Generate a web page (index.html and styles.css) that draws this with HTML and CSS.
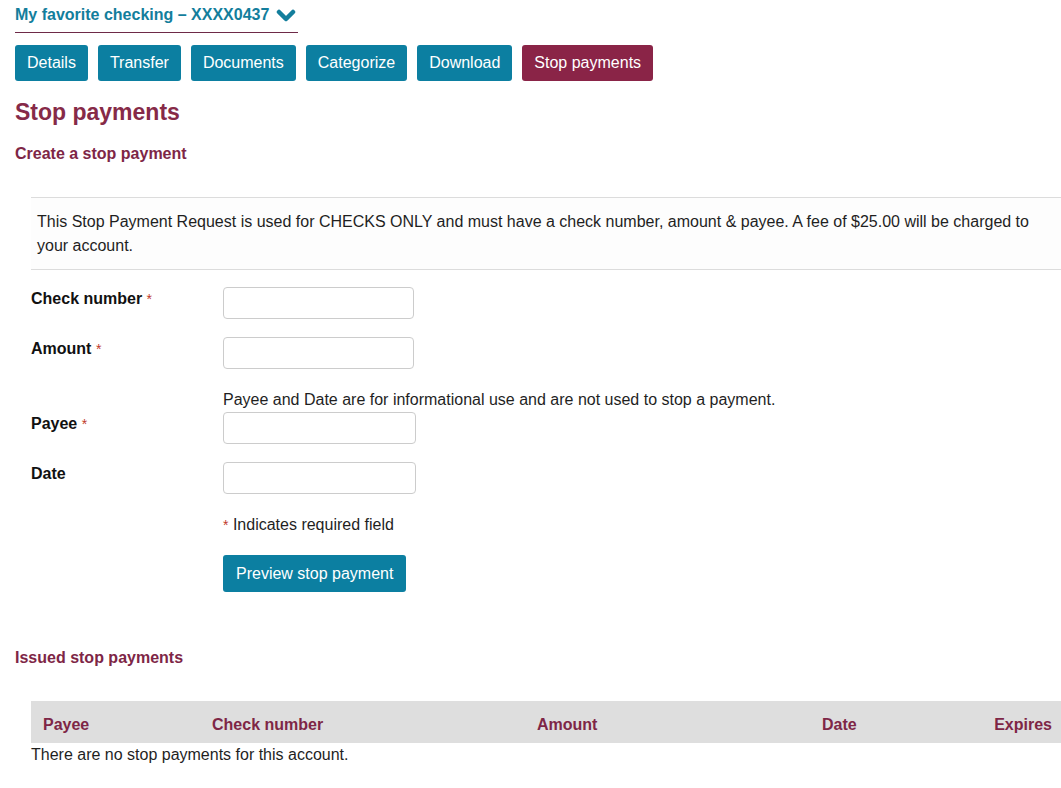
FILE: index.html
```html
<!DOCTYPE html>
<html>
<head>
<meta charset="utf-8">
<link rel="stylesheet" href="styles.css">
</head>
<body>
<div class="page">
  <div class="account">
    <span class="account-name">My favorite checking – XXXX0437</span>
    <svg class="chev" width="20" height="14" viewBox="0 0 20 14"><polyline points="3,3 10,10 17,3" fill="none" stroke="#137e9c" stroke-width="4.5" stroke-linecap="round" stroke-linejoin="round"/></svg>
  </div>
  <nav class="tabs">
    <a class="tab">Details</a>
    <a class="tab">Transfer</a>
    <a class="tab">Documents</a>
    <a class="tab">Categorize</a>
    <a class="tab">Download</a>
    <a class="tab active">Stop payments</a>
  </nav>
  <h1 class="title">Stop payments</h1>
  <h2 class="subtitle">Create a stop payment</h2>
  <div class="section">
    <p class="info">This Stop Payment Request is used for CHECKS ONLY and must have a check number, amount &amp; payee. A fee of $25.00 will be charged to your account.</p>
    <form class="form">
      <div class="row">
        <label class="label">Check number <span class="req">*</span></label>
        <input class="field" type="text">
      </div>
      <div class="row">
        <label class="label">Amount <span class="req">*</span></label>
        <input class="field" type="text">
      </div>
      <div class="note">Payee and Date are for informational use and are not used to stop a payment.</div>
      <div class="row">
        <label class="label">Payee <span class="req">*</span></label>
        <input class="field wide" type="text">
      </div>
      <div class="row">
        <label class="label">Date</label>
        <input class="field wide" type="text">
      </div>
      <div class="required"><span class="req">*</span> Indicates required field</div>
      <div class="actions"><button type="button" class="primary">Preview stop payment</button></div>
    </form>
  </div>
  <h2 class="subtitle issued">Issued stop payments</h2>
  <div class="table">
    <div class="thead">
      <div class="th">Payee</div>
      <div class="th">Check number</div>
      <div class="th">Amount</div>
      <div class="th">Date</div>
      <div class="th last">Expires</div>
    </div>
    <div class="empty">There are no stop payments for this account.</div>
  </div>
</div>
</body>
</html>
```

FILE: styles.css
```css
html, body {
  margin: 0;
  padding: 0;
  background: #fff;
}
body {
  font-family: "Liberation Sans", Arial, sans-serif;
  font-size: 16px;
  color: #1f1f1f;
}
.page {
  padding-left: 15px;
  padding-top: 5px;
}
.account {
  display: inline-flex;
  align-items: center;
  gap: 7px;
  width: 283px;
  line-height: 20px;
  padding-bottom: 7px;
  border-bottom: 1px solid #6e2a48;
}
.account-name {
  font-weight: bold;
  color: #137e9c;
}
.chev {
  display: block;
  margin-top: 1px;
}
.tabs {
  display: flex;
  gap: 10px;
  margin-top: 12px;
}
.tab {
  display: block;
  background: #0c7fa1;
  color: #fff;
  line-height: 20px;
  padding: 8px 12px;
  border-radius: 3px;
}
.tab.active {
  background: #8a2447;
}
.title {
  margin: 17px 0 0;
  font-size: 23px;
  line-height: 28px;
  font-weight: bold;
  color: #862a48;
}
.subtitle {
  margin: 18px 0 0;
  font-size: 16px;
  line-height: 20px;
  font-weight: bold;
  color: #7e2646;
}
.section {
  margin-top: 33px;
  padding-left: 16px;
}
.info {
  margin: 0;
  padding: 12px 24px 11px 6px;
  line-height: 24px;
  border-top: 1px solid #dcdcdc;
  border-bottom: 1px solid #dcdcdc;
  background: #fdfdfd;
}
.form {
  margin-top: 17px;
  display: flex;
  flex-direction: column;
}
.row {
  display: grid;
  grid-template-columns: 192px auto;
  justify-content: start;
  margin-bottom: 18px;
}
.label {
  font-weight: bold;
  color: #111;
  line-height: 20px;
  padding-top: 2px;
}
.req {
  color: #c0392b;
  font-weight: normal;
  font-size: 14px;
}
.field {
  box-sizing: border-box;
  width: 191px;
  height: 32px;
  border: 1px solid #cccccc;
  border-radius: 4px;
  margin: 0;
  font: inherit;
}
.field.wide {
  width: 193px;
}
.note {
  margin: 3px 0 2px 192px;
  line-height: 20px;
}
.required {
  margin: 3px 0 0 192px;
  line-height: 20px;
}
.actions {
  margin: 20px 0 0 192px;
}
.primary {
  font: inherit;
  color: #fff;
  background: #0c7fa1;
  border: none;
  border-radius: 3px;
  padding: 8px 13px;
  line-height: 21px;
}
.issued {
  margin-top: 56px;
}
.table {
  margin-top: 33px;
  margin-left: 16px;
}
.thead {
  display: grid;
  grid-template-columns: 169px 325px 285px 1fr auto;
  background: #dedede;
  height: 42px;
  align-items: center;
  padding-top: 5px;
  box-sizing: border-box;
}
.th {
  padding-left: 12px;
  font-weight: bold;
  color: #7e2646;
  line-height: 20px;
}
.th.last {
  padding-right: 9px;
}
.empty {
  line-height: 20px;
  margin-top: 2px;
}
```
